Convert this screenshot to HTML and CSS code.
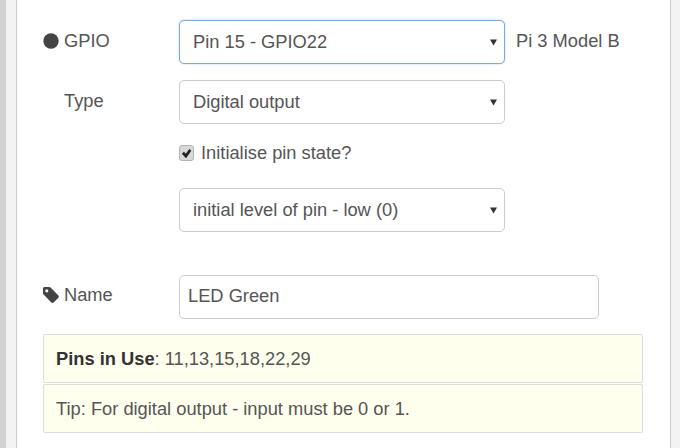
FILE: index.html
```html
<!DOCTYPE html>
<html lang="en">
<head>
    <meta charset="UTF-8">
    <title>GPIO node</title>
    <link rel="stylesheet" href="styles.css">
</head>
<body>
    <div class="gutter gutter-left"></div>

    <!-- edit dialog -->
    <main class="panel">
        <div class="form-row">
            <label class="form-label">
                <svg class="icon" viewBox="0 0 16 16"><circle cx="8" cy="8" r="7.7"/></svg>
                GPIO
            </label>
            <div class="select-wrap">
                <select class="field field-focus"><option>Pin 15 - GPIO22</option></select>
                <svg class="caret" viewBox="0 0 8 8"><path d="M0 1h8L4 8z"/></svg>
            </div>
            <span class="model">Pi 3 Model B</span>
        </div>

        <div class="form-row">
            <label class="form-label label-plain">Type</label>
            <div class="select-wrap">
                <select class="field"><option>Digital output</option></select>
                <svg class="caret" viewBox="0 0 8 8"><path d="M0 1h8L4 8z"/></svg>
            </div>
        </div>

        <div class="check-row">
            <span class="check">
                <svg viewBox="0 0 14 14"><path d="M2 7.200l2.200-2.200 2 2.200L10 2.200l2.200 1.800-5.700 8z"/></svg>
            </span>
            <span class="check-text">Initialise pin state?</span>
        </div>

        <div class="form-row">
            <div class="form-label"></div>
            <div class="select-wrap">
                <select class="field"><option>initial level of pin - low (0)</option></select>
                <svg class="caret" viewBox="0 0 8 8"><path d="M0 1h8L4 8z"/></svg>
            </div>
        </div>

        <div class="form-row name-row">
            <label class="form-label">
                <svg class="icon" viewBox="0 0 16 16"><path d="M0 1.6C0 .7.7 0 1.6 0h4.6c.6 0 1 .2 1.4.6l7.8 7.8c.6.7.6 1.7 0 2.3l-4.8 4.8c-.7.6-1.700.6-2.300 0L.6 7.600C.2 7.200 0 6.800 0 6.200zM3.800 5.400a1.600 1.600 0 1 0 0-3.200 1.600 1.600 0 0 0 0 3.200z" fill-rule="evenodd"/></svg>
                Name
            </label>
            <input class="field field-name" type="text" value="LED Green">
        </div>

        <div class="tip tip-first"><b>Pins in Use</b>: 11,13,15,18,22,29</div>
        <div class="tip">Tip: For digital output - input must be 0 or 1.</div>
    </main>

    <div class="gutter gutter-right"></div>
</body>
</html>
```

FILE: styles.css
```css
* {
    margin: 0;
    padding: 0;
    box-sizing: border-box;
}

html,
body {
    height: 100%;
}

body {
    display: flex;
    overflow: hidden;
    font-family: "Liberation Sans", Arial, sans-serif;
    font-size: 18.3px;
    color: #555;
    background: #fff;
}

/* grey strips either side of the dialog */
.gutter {
    flex: none;
    background: #f3f3f3;
}

.gutter-left {
    width: 17px;
    border-left: 6px solid #d2d2d2;
    border-right: 1px solid #ccc;
}

.gutter-right {
    width: 10px;
    border-left: 1px solid #ccc;
}

.panel {
    flex: 1;
    padding: 20px 26px 0 26px;
}

/* form rows */
.form-row {
    display: flex;
    align-items: center;
    margin-bottom: 16px;
}

.form-label {
    display: flex;
    align-items: center;
    gap: 5px;
    width: 136px;
    flex: none;
    margin-top: -2px;
}

.label-plain {
    padding-left: 21px;
}

.name-row .form-label {
    margin-top: -4px;
}

.icon {
    width: 16px;
    height: 16px;
    fill: #444;
}

.select-wrap {
    position: relative;
    width: 326px;
    flex: none;
}

.field {
    display: block;
    width: 100%;
    height: 44px;
    font-family: inherit;
    font-size: inherit;
    color: #555;
    background: #fff;
    border: 1px solid #ccc;
    border-radius: 5px;
    padding: 0 13px 2px;
    appearance: none;
    outline: none;
}

.field-focus {
    border-color: #80a8da;
    box-shadow: 0 0 2px rgba(102, 150, 220, 0.5);
}

.caret {
    position: absolute;
    top: 18px;
    right: 8px;
    width: 7px;
    height: 8px;
    fill: #333;
}

.model {
    margin-left: 11px;
    margin-top: -2px;
}

.check-row {
    display: flex;
    align-items: center;
    gap: 7px;
    height: 26px;
    margin: 0 0 22px 136px;
}

.check {
    display: block;
    width: 15px;
    height: 16px;
    padding-top: 1px;
    background: #d8d8d8;
    border: 1px solid #b4b4b4;
    border-radius: 3px;
}

.check svg {
    display: block;
    width: 13px;
    height: 13px;
    fill: #222;
}

.name-row {
    margin-top: 43px;
}

.field-name {
    width: 420px;
    padding: 0 8px 2px;
}

/* yellow tip boxes */
.tip {
    width: 600px;
    height: 49px;
    display: flex;
    align-items: center;
    white-space: pre;
    padding: 1px 12px 0;
    background: #ffffee;
    border: 1px solid #ddd;
    border-radius: 2px;
}

.tip b {
    color: #333;
}

.tip-first {
    margin-top: -1px;
    margin-bottom: 1px;
}
```
